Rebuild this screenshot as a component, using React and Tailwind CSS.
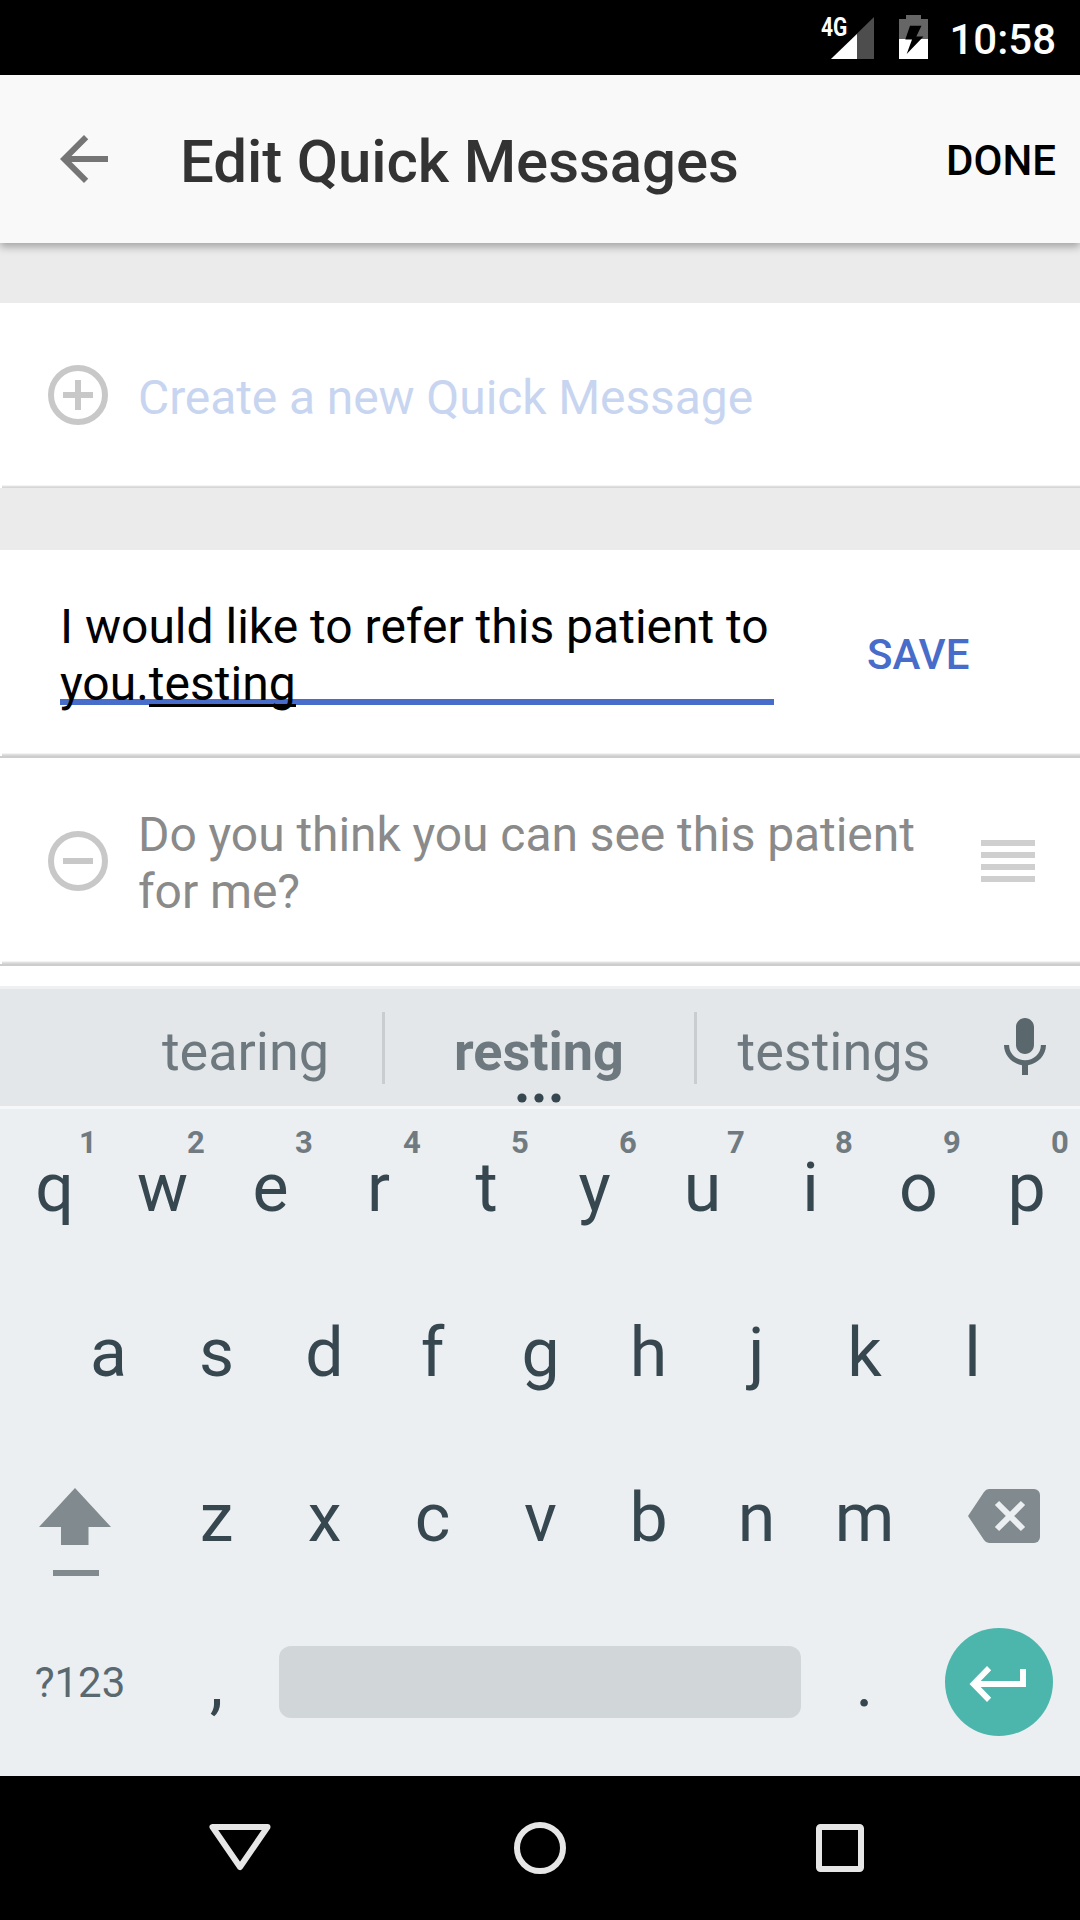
const HINTED = [["q", "1"], ["w", "2"], ["e", "3"], ["r", "4"], ["t", "5"], ["y", "6"], ["u", "7"], ["i", "8"], ["o", "9"], ["p", "0"]];

function Key({ label, hint }) {
  return (
    <div className="relative w-[108px] pt-[39px] pl-px text-center text-[68px] leading-[80px] text-[#37474f]">
      {label}
      {hint && (
        <span className="absolute top-[16px] left-[79px] text-[31px] leading-[36px] font-bold text-[#6f7b81]">{hint}</span>
      )}
    </div>
  );
}

function StatusBar() {
  return (
    <div className="flex h-[75px] justify-end bg-black pr-[24px] text-white">
      <div className="mt-[13px] w-[10px] text-[25px] leading-[30px] font-bold">
        <span className="block w-[34px] origin-left scale-x-[0.84]">4G</span>
      </div>
      <svg className="mt-[17px] h-[42px] w-[43px]" viewBox="0 0 43 42">
        <path d="M43 0V42H0Z" fill="#4d4d4d" />
        <path d="M26 17V42H0Z" fill="#fff" />
      </svg>
      <svg className="mt-[15px] ml-[25px] h-[44px] w-[29px]" viewBox="0 0 29 44">
        <path d="M7 0h15v4h7v20H0V4h7z" fill="#666" />
        <path d="M0 24h29v20H0z" fill="#fff" />
        <path d="M11 10.7h11.5L17.3 21.5h7.2L7.7 39l5.3-14.5H6.3z" fill="#000" />
      </svg>
      <span className="mt-[15px] ml-[21px] text-[42px] leading-[50px] font-medium">10:58</span>
    </div>
  );
}

function Separator() {
  return (
    <div className="flex h-[5px] flex-col">
      <div className="ml-[2px] h-px bg-[#f3f3f3]" />
      <div className="ml-[2px] h-px bg-[#e0e0e0]" />
      <div className="ml-[2px] h-px bg-[#d6d6d6]" />
      <div className="h-[2px] bg-[#cdcdcd]" />
    </div>
  );
}

function CircleIcon({ plus, className }) {
  return (
    <svg className={className} viewBox="0 0 60 60" fill="none" stroke="#c8c8c8" strokeWidth="6">
      <circle cx="30" cy="30" r="27" />
      <path d={plus ? "M15 30H45M30 15V45" : "M15 30H45"} />
    </svg>
  );
}

export default function App() {
  return (
    <div className="flex h-[1920px] w-[1080px] flex-col overflow-hidden bg-[#ebebeb] font-[Roboto,sans-serif]">
      <StatusBar />
      <header className="relative flex h-[168px] bg-[#f9f9f9] pr-[24px] pl-[48px] shadow-[0_4px_8px_0_rgba(0,0,0,0.3)]">
        <svg className="mt-[48px] size-[72px]" viewBox="0 0 24 24" fill="#757575">
          <path d="M20 11H7.83l5.59-5.59L12 4l-8 8 8 8 1.41-1.41L7.83 13H20v-2z" />
        </svg>
        <h1 className="mt-[51px] ml-[60px] text-[60px] leading-[71px] font-medium tracking-[-0.1px] text-[#333]">Edit Quick Messages</h1>
        <button className="mt-[61px] ml-auto h-[49px] text-[42px] leading-[49px] font-medium text-black">DONE</button>
      </header>

      <section className="mt-[60px] flex h-[185px] flex-col bg-white">
        <div className="flex flex-1 pl-[48px]">
          <CircleIcon plus className="mt-[62px] size-[60px]" />
          <span className="mt-[66px] ml-[30px] text-[48px] leading-[57px] tracking-[-0.1px] text-[#c8d5f0]">Create a new Quick Message</span>
        </div>
        <div className="ml-[2px] h-px bg-[#f3f3f3]" />
        <div className="ml-[2px] h-px bg-[#e0e0e0]" />
        <div className="ml-[2px] h-px bg-[#d6d6d6]" />
      </section>

      <section className="mt-[62px] h-[436px] bg-white">
        <div className="flex h-[203px] pl-[60px]">
          <div className="relative mt-[48px] h-[107px] w-[714px]">
            <div className="absolute bottom-0 h-[6px] w-full bg-[#476cc9]" />
            <p className="relative text-[48px] leading-[57px] text-black">
              I would like to refer this patient to<br />
              you.<span className="inline-block h-[57px] bg-[linear-gradient(#000,#000)] bg-[length:100%_3px] bg-[position:0_49px] bg-no-repeat">testing</span>
            </p>
          </div>
          <button className="mt-[80px] ml-[93px] h-[49px] text-[42px] leading-[49px] font-medium text-[#476cc9]">SAVE</button>
        </div>
        <Separator />
        <div className="flex h-[203px] pl-[48px]">
          <CircleIcon className="mt-[73px] size-[60px]" />
          <p className="mt-[48px] ml-[30px] w-[800px] text-[48px] leading-[57px] tracking-[-0.07px] text-[#8a8a8a]">
            Do you think you can see this patient<br />for me?
          </p>
          <div className="mt-[82px] ml-[43px] flex w-[54px] flex-col gap-[6px]">
            <i className="h-[6px] bg-[#cfcfcf]" />
            <i className="h-[6px] bg-[#cfcfcf]" />
            <i className="h-[6px] bg-[#cfcfcf]" />
            <i className="h-[6px] bg-[#cfcfcf]" />
          </div>
        </div>
        <Separator />
      </section>

      <div className="flex h-[123px] border-t-[3px] border-b-[3px] border-t-[#eef0f2] border-b-[#f5f7f9] bg-[#e3e7ea] text-[54px] leading-[64px] text-[#6d797f]">
        <div className="w-[382px] pt-[31px] pl-[109px] text-center">tearing</div>
        <div className="mt-[23px] h-[72px] w-[3px] bg-[#c9cdd0]" />
        <div className="flex w-[309px] flex-col items-center pt-[31px] pr-px">
          <b className="font-bold">resting</b>
          <svg className="mt-[9px] h-[10px] w-[44px]" viewBox="0 0 44 10" fill="#37474f">
            <circle cx="5" cy="5" r="4.6" />
            <circle cx="22" cy="5" r="4.6" />
            <circle cx="39" cy="5" r="4.6" />
          </svg>
        </div>
        <div className="mt-[23px] h-[72px] w-[3px] bg-[#c9cdd0]" />
        <div className="w-[273px] pt-[31px] pl-px text-center">testings</div>
        <svg className="mt-[23px] ml-[19px] size-[72px]" viewBox="0 0 24 24" fill="#5a686e">
          <path d="M12 14c1.66 0 2.99-1.34 2.99-3L15 5c0-1.66-1.34-3-3-3S9 3.34 9 5v6c0 1.66 1.34 3 3 3zm5.3-3c0 3-2.54 5.1-5.3 5.1S6.7 14 6.7 11H5c0 3.41 2.72 6.23 6 6.72V21h2v-3.28c3.28-.48 6-3.3 6-6.72h-1.7z" />
        </svg>
      </div>

      <div className="h-[667px] bg-[#ebeff2]">
        <div className="flex h-[165px]">
          {HINTED.map(([k, n]) => <Key key={k} label={k} hint={n} />)}
        </div>
        <div className="flex h-[165px] pl-[54px]">
          {"asdfghjkl".split("").map((k) => <Key key={k} label={k} />)}
        </div>
        <div className="flex h-[165px]">
          <svg className="mt-[49px] mr-[51px] ml-[39px] h-[88px] w-[72px]" viewBox="0 0 72 88" fill="#818b8f">
            <path d="M36 0 72 39H49.5V57H22V39H0Z" />
            <path d="M14 82h46v6H14z" />
          </svg>
          {"zxcvbnm".split("").map((k) => <Key key={k} label={k} />)}
          <svg className="mt-[50px] ml-[50px] h-[54px] w-[72px]" viewBox="0 0 72 54">
            <path d="M21 0H66a6 6 0 0 1 6 6V48a6 6 0 0 1-6 6H21q-3 0-5-3L0 27 16 3q2-3 5-3Z" fill="#818b8f" />
            <path d="M29 14 55 40M55 14 29 40" stroke="#ebeff2" strokeWidth="6" />
          </svg>
        </div>
        <div className="flex h-[165px]">
          <span className="w-[162px] pt-[54px] pr-[2px] text-center text-[42px] leading-[49px] text-[#5a696f]">?123</span>
          <Key label="," />
          <div className="mt-[42px] mr-[9px] ml-[9px] h-[72px] w-[522px] rounded-[12px] bg-[#d1d6d9]" />
          <Key label="." />
          <div className="mt-[24px] ml-[27px] size-[108px] rounded-full bg-[#4db6ac]">
            <svg className="size-[108px]" viewBox="0 0 108 108" fill="#fff">
              <path d="M24.500 56 42 38l4.200 4.200L35.700 53H75V41h6V59H35.700L46.200 69.800 42 74Z" />
            </svg>
          </div>
        </div>
      </div>

      <nav className="flex h-[144px] justify-center gap-[228px] bg-black pt-[36px]">
        <svg className="size-[72px]" viewBox="0 0 72 72" fill="none" stroke="#e6e6e6" strokeWidth="6" strokeLinejoin="round">
          <path d="M8.500 15H63.500L36 55Z" />
        </svg>
        <svg className="size-[72px]" viewBox="0 0 72 72" fill="none" stroke="#e6e6e6" strokeWidth="6">
          <circle cx="36" cy="36" r="23" />
        </svg>
        <svg className="size-[72px]" viewBox="0 0 72 72" fill="none" stroke="#e6e6e6" strokeWidth="6">
          <rect x="15" y="15" width="42" height="42" rx="1.500" />
        </svg>
      </nav>
    </div>
  );
}
